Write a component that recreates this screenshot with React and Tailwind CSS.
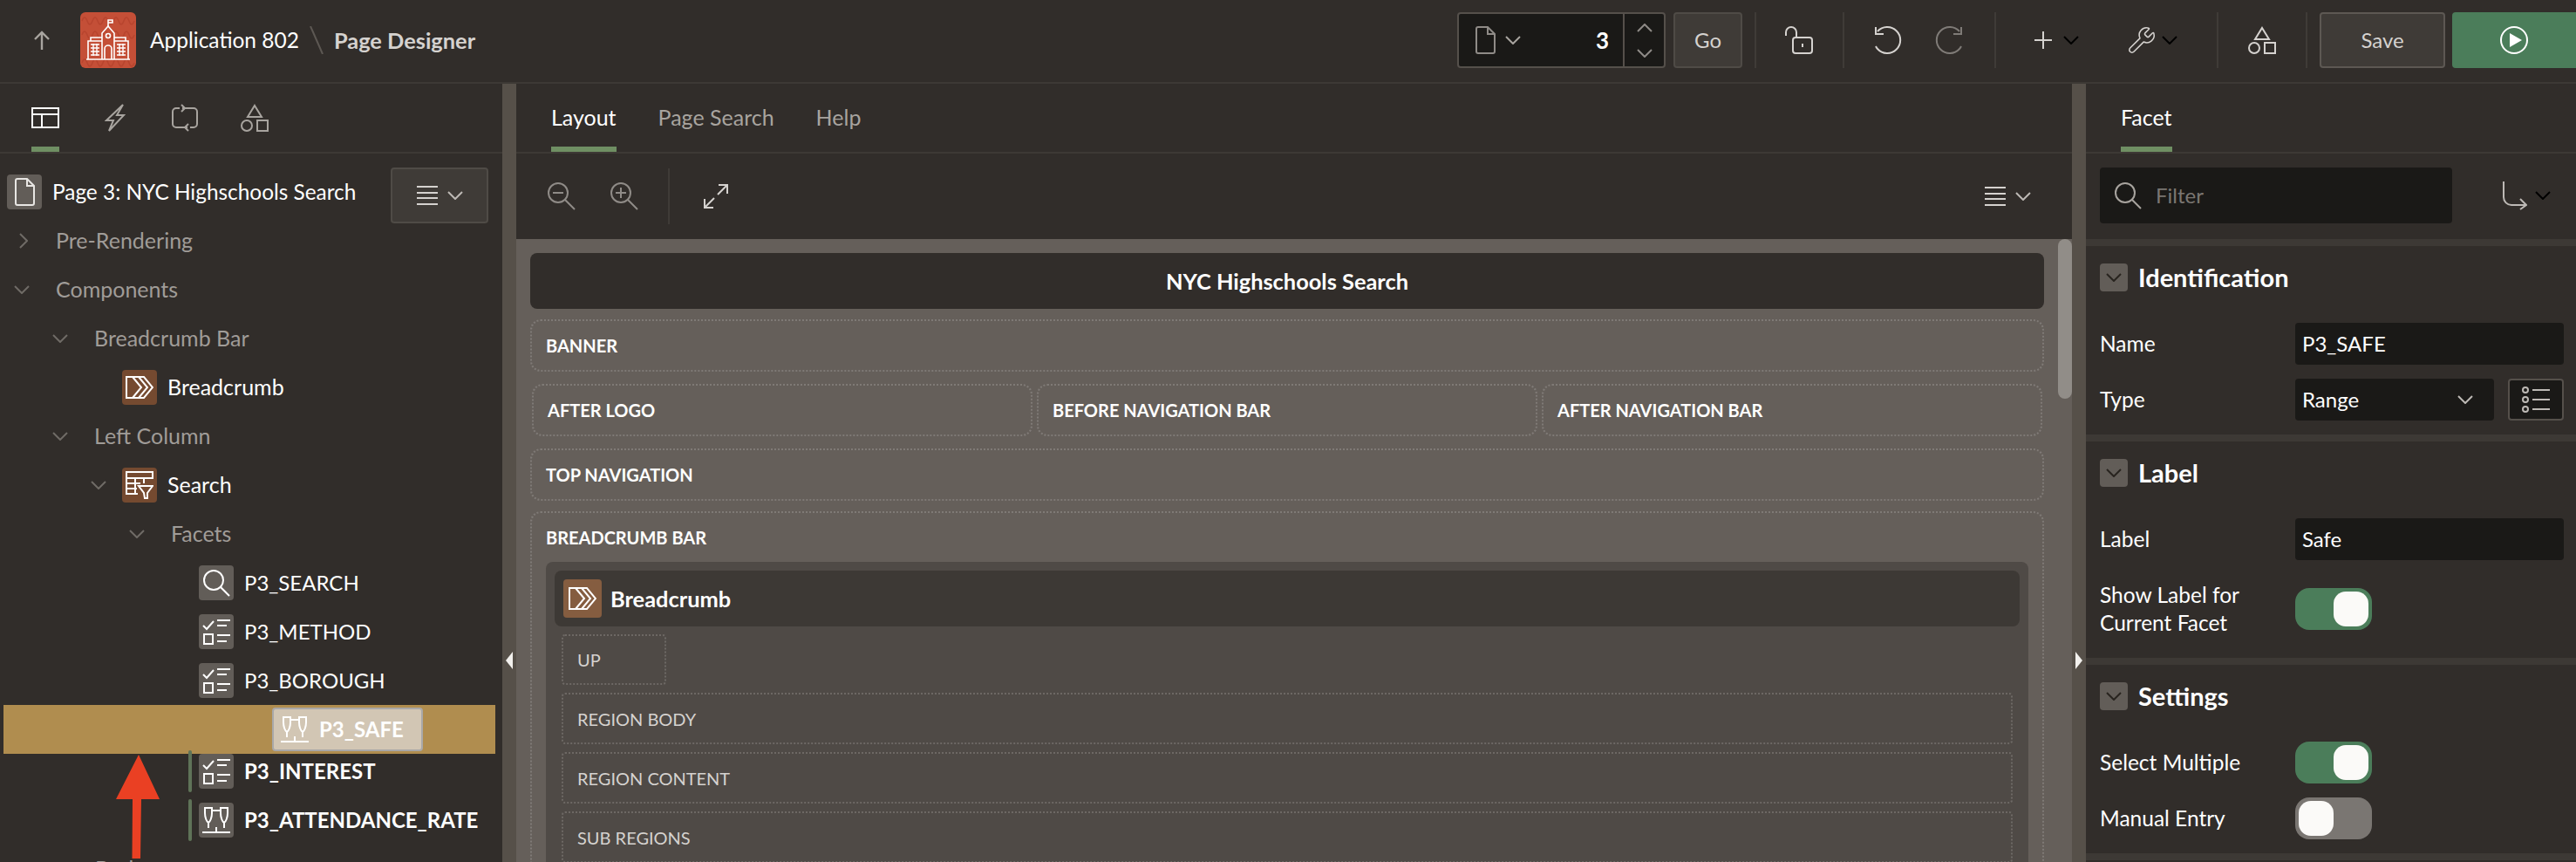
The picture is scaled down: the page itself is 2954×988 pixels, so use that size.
import React from 'react';
import { Wrench } from 'lucide-react';

const Chev = ({ className = 'text-[#bdb9b5]', dir = 'down' }) => (
  <svg viewBox="0 0 18 10" fill="none" stroke="currentColor" strokeWidth="2" className={`w-[18px] h-[10px] shrink-0 ${dir === 'right' ? '-rotate-90' : ''} ${dir === 'up' ? 'rotate-180' : ''} ${className}`}>
    <path d="M1 1l8 8 8-8" />
  </svg>
);

const Icon = ({ w = 32, h = 32, sw = 2, className = '', children }) => (
  <svg viewBox={`0 0 ${w} ${h}`} width={w} height={h} fill="none" stroke="currentColor" strokeWidth={sw} className={`shrink-0 ${className}`}>
    {children}
  </svg>
);

const PageIcon = ({ className }) => (
  <Icon w={24} h={32} className={className}>
    <path d="M2 3a2 2 0 0 1 2-2h11l8 8v20a2 2 0 0 1-2 2H4a2 2 0 0 1-2-2z" />
    <path d="M15 1v8h8" />
  </Icon>
);

const ShapesIcon = ({ className }) => (
  <Icon className={className}>
    <path d="M16 2l8 13H8z" />
    <circle cx="7" cy="25" r="6" />
    <rect x="19" y="19" width="12" height="12" />
  </Icon>
);

const MenuLines = ({ className }) => (
  <Icon w={24} h={22} className={className}>
    <path d="M0 1h24M0 8h24M0 14h24M0 21h24" />
  </Icon>
);

const Magnifier = ({ className }) => (
  <Icon className={className}>
    <circle cx="13" cy="13" r="11" />
    <path d="M21 21l10 10" />
  </Icon>
);

const Logo = () => (
  <div className="w-16 h-16 rounded-md bg-[#c44f37] shrink-0">
    <svg viewBox="0 0 64 64" width="64" height="64" fill="none" stroke="#fff" strokeWidth="1.6">
      <path d="M2 10q3-8 6 0t6 0 6 0 6 0 6 0 6 0 6 0 6 0 6 0 6 0M2 26q3-8 6 0t6 0 6 0 6 0 6 0 6 0 6 0 6 0 6 0 6 0M2 58q3-8 6 0t6 0 6 0 6 0 6 0 6 0 6 0 6 0 6 0 6 0" stroke="#b8452f" />
      <path d="M32 16V9h5v3h-5" />
      <path d="M25 54V24l7-8 7 8v30" />
      <circle cx="32" cy="27" r="2.5" />
      <path d="M9 54V33h16M39 33h16v21M12 33v-4h13M39 29h13v4M7 54h50" />
      <path d="M28 54V42a4 4 0 0 1 8 0v12" />
      <path d="M12 37h10M12 41h10M12 45h10M12 49h10M42 37h10M42 41h10M42 45h10M42 49h10M15 36v14M19 36v14M45 36v14M49 36v14" strokeWidth="1.4" />
    </svg>
  </div>
);

const Divider = ({ className = '' }) => <div className={`w-0.5 h-16 bg-[#3f3b37] shrink-0 ${className}`} />;

const Header = () => (
  <div className="flex items-center h-[96px] pb-0.5 border-b-2 border-[#3d3935]">
    <svg viewBox="0 0 18 22" width="18" height="22" fill="none" stroke="#a8a49f" strokeWidth="2.4" className="ml-[39px] shrink-0">
      <path d="M9 22V2M1 10l8-8 8 8" />
    </svg>
    <div className="ml-[35px]"><Logo /></div>
    <span className="ml-4 text-[24.5px] text-white">Application 802</span>
    <svg viewBox="0 0 16 32" width="16" height="32" stroke="#5d5853" strokeWidth="2" className="ml-3 shrink-0"><path d="M1 0l14 32" /></svg>
    <span className="ml-3 text-[25.4px] font-bold text-[#d5d2cf]">Page Designer</span>

    <div className="ml-auto flex items-center">
      <div className="flex items-center w-[239px] h-16 rounded bg-[#1a1917] border-2 border-[#55504b]">
        <PageIcon className="ml-[18px] text-[#8f8b87]" />
        <Chev className="ml-[11px] text-[#a8a49f]" />
        <span className="ml-auto mr-4 text-[26px] font-bold text-white">3</span>
        <div className="flex flex-col items-center justify-center gap-[19px] w-[47px] h-full border-l-2 border-[#55504b] text-[#8f8b87]">
          <Chev dir="up" className="text-[#8f8b87]" />
          <Chev className="text-[#8f8b87]" />
        </div>
      </div>
      <div className="ml-[9px] w-[79px] h-16 flex items-center justify-center rounded bg-[#3f3b37] border-2 border-[#4f4b46] text-2xl text-[#d5d2cf]">Go</div>
      <Divider className="ml-[14px]" />
      <Icon className="ml-[33px] text-[#d5d2cf]">
        <path d="M1 11V7a6 6 0 0 1 12 0v6" />
        <rect x="9" y="13" width="22" height="18" rx="3" />
        <path d="M20 20v4" />
      </Icon>
      <Divider className="ml-[34px]" />
      <Icon className="ml-[34px] text-[#d5d2cf]">
        <path d="M4 6a15 15 0 1 1 0 20 15 15 0 0 1-2-3" />
        <path d="M2 1v8h9" />
      </Icon>
      <Icon className="ml-[38px] text-[#7f7b77]">
        <path d="M28 6a15 15 0 1 0 0 20 15 15 0 0 0 2-3" />
        <path d="M30 1v8h-9" />
      </Icon>
      <Divider className="ml-[36px]" />
      <Icon w={20} h={20} className="ml-[44px] text-[#d5d2cf]"><path d="M0 10h20M10 0v20" /></Icon>
      <Chev className="ml-[13px]" />
      <Wrench size={34} strokeWidth={1.1} className="ml-[55px] text-[#d5d2cf] shrink-0" />
      <Chev className="ml-[6px]" />
      <Divider className="ml-[45px]" />
      <ShapesIcon className="ml-[34px] text-[#d5d2cf]" />
      <Divider className="ml-[34px]" />
      <div className="ml-[14px] w-[144px] h-16 flex items-center justify-center rounded bg-[#3f3b37] border-2 border-[#5d5853] text-2xl text-[#d5d2cf]">Save</div>
      <div className="ml-2 w-[142px] h-16 flex items-center justify-center rounded-l bg-[#4b7d5a]">
        <svg viewBox="0 0 32 32" width="32" height="32" className="shrink-0">
          <circle cx="16" cy="16" r="15" fill="none" stroke="#fff" strokeWidth="2" />
          <path d="M11 8l14 8-14 8z" fill="#fff" />
        </svg>
      </div>
    </div>
  </div>
);

const IconBox = ({ tone = 'gray', children }) => (
  <div className={`w-10 h-10 shrink-0 rounded flex items-center justify-center text-white ${tone === 'brown' ? 'bg-[#754a30]' : 'bg-[#625d58]'}`}>
    {children}
  </div>
);

const BreadcrumbGlyph = () => (
  <svg viewBox="0 0 32 26" width="32" height="26" fill="none" stroke="currentColor" strokeWidth="2">
    <path d="M1 1h20l10 12-10 12H1z" />
    <path d="M8 1l10 12L8 25M15 1l10 12-10 12" />
  </svg>
);

const SearchGlyph = () => (
  <svg viewBox="0 0 32 32" width="32" height="32" fill="none" stroke="currentColor" strokeWidth="2">
    <path d="M1 1h30v7H1zM1 8v18h13M1 14h16M1 20h12M11 8v18M21 8v6" />
    <path d="M15 17h16l-6 8v6h-3l-1-6z" />
  </svg>
);

const ChecklistGlyph = () => (
  <svg viewBox="0 0 32 32" width="32" height="32" fill="none" stroke="currentColor" strokeWidth="2">
    <path d="M1 9l4 4 8-9M17 3h15M17 9h11M17 20h15M17 27h11" />
    <rect x="2" y="19" width="10" height="11" />
  </svg>
);

const RangeGlyph = ({ size = 32 }) => (
  <svg viewBox="0 0 32 32" width={size} height={size} fill="none" stroke="currentColor" strokeWidth="2">
    <path d="M3 2h8v6c0 5-2 10-4 11-2-1-4-6-4-11zM21 2h8v6c0 5-2 10-4 11-2-1-4-6-4-11zM11 5h10" />
    <path d="M0 30h32M7 19v6M16 24v6M25 19v6" />
  </svg>
);

const MagnifierGlyph = () => (
  <svg viewBox="0 0 32 32" width="32" height="32" fill="none" stroke="currentColor" strokeWidth="2">
    <circle cx="13" cy="13" r="11" />
    <path d="M21 21l10 10" />
  </svg>
);

const TreeLabel = ({ className = 'text-[#a09c98]', children }) => (
  <span className={`text-[25px] whitespace-nowrap ${className}`}>{children}</span>
);

const ItemLabel = ({ className = 'font-normal', children }) => (
  <span className={`ml-3 text-2xl text-white whitespace-nowrap ${className}`}>{children}</span>
);

const Tree = () => (
  <div className="-mt-2">
    <div className="flex items-center h-14 pl-[18px]">
      <Chev dir="right" className="w-[18px] text-[#6f6b66]" />
      <TreeLabel className="ml-[28px] text-[#a09c98]">Pre-Rendering</TreeLabel>
    </div>
    <div className="flex items-center h-14 pl-[16px]">
      <Chev className="text-[#6f6b66]" />
      <TreeLabel className="ml-[30px] text-[#a09c98]">Components</TreeLabel>
    </div>
    <div className="flex items-center h-14 pl-[60px]">
      <Chev className="text-[#6f6b66]" />
      <TreeLabel className="ml-[30px] text-[#a09c98]">Breadcrumb Bar</TreeLabel>
    </div>
    <div className="flex items-center h-14 pl-[140px]">
      <IconBox tone="brown"><BreadcrumbGlyph /></IconBox>
      <TreeLabel className="ml-3 text-white">Breadcrumb</TreeLabel>
    </div>
    <div className="flex items-center h-14 pl-[60px]">
      <Chev className="text-[#6f6b66]" />
      <TreeLabel className="ml-[30px] text-[#a09c98]">Left Column</TreeLabel>
    </div>
    <div className="flex items-center h-14 pl-[104px]">
      <Chev className="text-[#6f6b66]" />
      <div className="ml-[18px]"><IconBox tone="brown"><SearchGlyph /></IconBox></div>
      <TreeLabel className="ml-3 text-white">Search</TreeLabel>
    </div>
    <div className="flex items-center h-14 pl-[148px]">
      <Chev className="text-[#6f6b66]" />
      <TreeLabel className="ml-[30px] text-[#a09c98]">Facets</TreeLabel>
    </div>
    <div className="flex items-center h-14 pl-[228px]">
      <IconBox><MagnifierGlyph /></IconBox>
      <ItemLabel>P3_SEARCH</ItemLabel>
    </div>
    <div className="flex items-center h-14 pl-[228px]">
      <IconBox><ChecklistGlyph /></IconBox>
      <ItemLabel>P3_METHOD</ItemLabel>
    </div>
    <div className="flex items-center h-14 pl-[228px]">
      <IconBox><ChecklistGlyph /></IconBox>
      <ItemLabel>P3_BOROUGH</ItemLabel>
    </div>
    <div className="flex items-center h-14 mx-1 w-[564px] -mb-2 bg-[#b08d4f]">
      <div className="ml-[308px] flex items-center w-[173px] h-[50px] rounded bg-[#d2c6b4] border-2 border-[#a9a8a8] text-white">
        <div className="ml-2"><RangeGlyph /></div>
        <span className="ml-3 text-2xl font-bold">P3_SAFE</span>
      </div>
    </div>
    <div className="relative flex items-center h-14 pl-[216px]">
      <div className="w-1 h-12 rounded-sm bg-[#5f7358]" />
      <div className="ml-2"><IconBox><ChecklistGlyph /></IconBox></div>
      <ItemLabel className="font-bold">P3_INTEREST</ItemLabel>
    </div>
    <div className="flex items-center h-14 pl-[216px]">
      <div className="w-1 h-12 rounded-sm bg-[#5f7358]" />
      <div className="ml-2"><IconBox><RangeGlyph /></IconBox></div>
      <ItemLabel className="font-bold">P3_ATTENDANCE_RATE</ItemLabel>
    </div>
    <div className="flex items-center h-14 pl-[109px]">
      <TreeLabel className="text-[#a09c98]">Body</TreeLabel>
    </div>
  </div>
);

const LeftPanel = () => (
  <div className="relative w-[576px] shrink-0 overflow-hidden">
    <div className="flex items-center h-[80px] border-b-2 border-[#3d3935] text-[#a8a49f]">
      <div className="ml-9 flex items-center h-full w-8 shadow-[inset_0_-6px_0_#6f8f63]">
        <Icon h={24} className="text-white">
          <rect x="1" y="1" width="30" height="22" />
          <path d="M1 8h30M12 8v15" />
        </Icon>
      </div>
      <Icon w={24} className="ml-[52px]">
        <path d="M21 1L2 19h8l-5 12 17-18h-8z" />
      </Icon>
      <Icon className="ml-[52px]">
        <path d="M13 5h13a4 4 0 0 1 4 4v14a4 4 0 0 1-4 4h-4M19 27H6a4 4 0 0 1-4-4V9a4 4 0 0 1 4-4h4" />
        <path d="M12 1l4 4-4 4M20 23l-4 4 4 4" />
      </Icon>
      <ShapesIcon className="ml-[48px]" />
    </div>
    <div className="flex items-center h-[64px] mt-4 pl-2">
      <div className="w-10 h-10 mb-2 flex items-center justify-center rounded bg-[#625d58] text-[#e8e6e3] shrink-0">
        <PageIcon />
      </div>
      <span className="ml-3 mb-2 text-[24.4px] text-white whitespace-nowrap">Page 3: NYC Highschools Search</span>
      <div className="ml-auto mr-4 w-[112px] h-16 flex items-center justify-center gap-[11px] rounded bg-[#3f3b37] border-2 border-[#4f4b46] text-[#d5d2cf]">
        <MenuLines />
        <Chev />
      </div>
    </div>
    <Tree />
    {/* annotation arrow over the tree */}
    <svg viewBox="0 0 50 120" width="50" height="120" className="absolute left-[133px] top-[769px]">
      <path d="M26 0L50 51H29L28 119H18.500L19 51H0z" fill="#ea4023" />
    </svg>
  </div>
);

const Splitter = ({ flip = false }) => (
  <div className="w-4 shrink-0 bg-[#565049] pt-[651px] flex justify-center">
    <svg viewBox="0 0 8 20" width="8" height="20" className={flip ? 'rotate-180' : ''}>
      <path d="M8 0v20L0 10z" fill="#f2f0ed" />
    </svg>
  </div>
);

const Slot = ({ className = '', children }) => (
  <div className={`flex items-center pl-4 rounded-xl border-2 border-dotted border-[#7f7a76] text-xl font-bold text-white ${className}`}>
    {children}
  </div>
);

const SubSlot = ({ className = 'h-[59px]', children }) => (
  <div className={`flex items-center pl-4 rounded border-2 border-dotted border-[#6d6864] text-xl text-[#d5d2cf] ${className}`}>
    {children}
  </div>
);

const CenterPanel = () => (
  <div className="w-[1784px] shrink-0 flex flex-col overflow-hidden">
    <div className="flex items-center h-[80px] border-b-2 border-[#3d3935] pl-10 text-[25px] text-[#a8a49f]">
      <div className="flex items-center h-full px-0 text-white shadow-[inset_0_-6px_0_#6f8f63]">Layout</div>
      <span className="ml-[48px]">Page Search</span>
      <span className="ml-[48px]">Help</span>
    </div>
    <div className="flex items-center h-[98px] shrink-0 text-[#8f8b87]">
      <Icon className="ml-[36px]">
        <circle cx="12" cy="12" r="11" />
        <path d="M20 20l11 11M6 12h12" />
      </Icon>
      <Icon className="ml-[40px]">
        <circle cx="12" cy="12" r="11" />
        <path d="M20 20l11 11M6 12h12M12 6v12" />
      </Icon>
      <div className="ml-[34px] w-0.5 h-16 bg-[#3f3b37]" />
      <Icon w={28} h={28} className="ml-[39px] text-[#d5d2cf]">
        <path d="M16 12L27 1M17 1h10v10M12 16L1 27M1 17v10h10" />
      </Icon>
      <div className="ml-auto mr-[47px] flex items-center gap-[11px] text-[#d5d2cf]">
        <MenuLines />
        <Chev />
      </div>
    </div>
    <div className="relative flex-1 bg-[#655f5a] pt-4 pl-4 pr-8 overflow-hidden">
      <div className="h-16 flex items-center justify-center rounded-lg bg-[#312d2a] text-[25.4px] font-bold text-white">NYC Highschools Search</div>
      <Slot className="mt-3 h-[60px]">BANNER</Slot>
      <div className="mt-[14px] px-0.5 grid grid-cols-3 gap-[5px] h-[60px]">
        <Slot>AFTER LOGO</Slot>
        <Slot>BEFORE NAVIGATION BAR</Slot>
        <Slot>AFTER NAVIGATION BAR</Slot>
      </div>
      <Slot className="mt-[14px] h-[60px]">TOP NAVIGATION</Slot>
      <div className="mt-3 h-[500px] rounded-xl border-2 border-dotted border-[#7f7a76] px-4">
        <div className="h-[56px] flex items-center text-xl font-bold text-white">BREADCRUMB BAR</div>
        <div className="h-[440px] rounded-t-lg bg-[#4f4a46] pt-[10px] px-[10px]">
          <div className="h-16 flex items-center rounded-lg bg-[#3d3935] pl-[10px]">
            <div className="w-11 h-11 flex items-center justify-center rounded bg-[#855d40] text-white"><BreadcrumbGlyph /></div>
            <span className="ml-[10px] text-[25.4px] font-bold text-white">Breadcrumb</span>
          </div>
          <div className="mt-[9px] mx-2 flex flex-col gap-[9px]">
            <SubSlot className="w-[120px] h-[58px]">UP</SubSlot>
            <SubSlot>REGION BODY</SubSlot>
            <SubSlot>REGION CONTENT</SubSlot>
            <SubSlot>SUB REGIONS</SubSlot>
          </div>
        </div>
      </div>
      <div className="absolute right-0 top-0 w-4 h-[183px] rounded-full bg-[#918d88]" />
    </div>
  </div>
);

const Toggle = ({ on }) => (
  <div className={`w-[88px] h-12 rounded-2xl p-1 flex shrink-0 ${on ? 'bg-[#4b7d5a] justify-end' : 'bg-[#7a7672] justify-start'}`}>
    <div className="w-10 h-10 rounded-[14px] bg-[#fbfaf8]" />
  </div>
);

const Band = () => <div className="h-2 bg-[#3d3935]" />;

const SectionHead = ({ children }) => (
  <div className="flex items-center h-8 pl-4">
    <div className="w-8 h-8 flex items-center justify-center rounded bg-[#625d58]">
      <Chev className="text-[#28241f]" />
    </div>
    <span className="ml-3 text-[29px] font-bold text-white">{children}</span>
  </div>
);

const Field = ({ label, className = 'h-12', children }) => (
  <div className={`flex items-center pl-4 ${className}`}>
    <div className="w-[224px] shrink-0 text-[24.5px] text-white">{label}</div>
    {children}
  </div>
);

const TextValue = ({ children }) => (
  <div className="w-[308px] h-12 flex items-center pl-2 rounded bg-[#1a1917] text-2xl text-white">{children}</div>
);

const RightPanel = () => (
  <div className="flex-1 flex flex-col overflow-hidden">
    <div className="flex items-center h-[80px] border-b-2 border-[#3d3935] pl-10 text-[25px] text-white">
      <div className="flex items-center h-full shadow-[inset_0_-6px_0_#6f8f63]">Facet</div>
    </div>
    <div className="flex items-center h-[64px] mt-4 pl-4">
      <div className="w-[404px] h-16 flex items-center rounded bg-[#1a1917] text-2xl text-[#7a7672]">
        <Magnifier className="ml-4 text-[#a8a49f]" />
        <span className="ml-4">Filter</span>
      </div>
      <Icon w={28} h={34} className="ml-[58px] text-[#bdb9b5]">
        <path d="M1 1v18a9 9 0 0 0 9 9h17M20 21l7 7-7 5" />
      </Icon>
      <Chev className="ml-[9px]" />
    </div>
    <div className="mt-[18px]"><Band /></div>

    <div className="pt-5 pb-4">
      <SectionHead>Identification</SectionHead>
      <div className="mt-9 flex flex-col gap-4">
        <Field label="Name"><TextValue>P3_SAFE</TextValue></Field>
        <Field label="Type">
          <div className="w-[228px] h-12 flex items-center justify-between pl-2 pr-[24px] rounded bg-[#1a1917] text-2xl text-white">
            Range
            <Chev />
          </div>
          <div className="ml-4 w-16 h-12 flex items-center justify-center rounded border-2 border-[#55504b] bg-[#1a1917]">
            <Icon h={32} className="text-[#bdb9b5]">
              <circle cx="4" cy="5" r="3" />
              <circle cx="4" cy="16" r="3" />
              <circle cx="4" cy="27" r="3" />
              <path d="M12 5h20M12 16h20M12 27h20" />
            </Icon>
          </div>
        </Field>
      </div>
    </div>
    <Band />

    <div className="pt-5 pb-8">
      <SectionHead>Label</SectionHead>
      <div className="mt-9 flex flex-col gap-8">
        <Field label="Label"><TextValue>Safe</TextValue></Field>
        <Field label={<span className="block leading-8">Show Label for<br />Current Facet</span>}>
          <Toggle on />
        </Field>
      </div>
    </div>
    <Band />

    <div className="pt-5 pb-4">
      <SectionHead>Settings</SectionHead>
      <div className="mt-9 flex flex-col gap-4">
        <Field label="Select Multiple"><Toggle on /></Field>
        <Field label="Manual Entry"><Toggle /></Field>
      </div>
    </div>
    <Band />
  </div>
);

export default function App() {
  return (
    <div className="w-[2954px] h-[988px] overflow-hidden bg-[#312d2a] font-[Lato,sans-serif] flex flex-col">
      <Header />
      <div className="flex flex-1 min-h-0">
        <LeftPanel />
        <Splitter />
        <CenterPanel />
        <Splitter flip />
        <RightPanel />
      </div>
    </div>
  );
}
